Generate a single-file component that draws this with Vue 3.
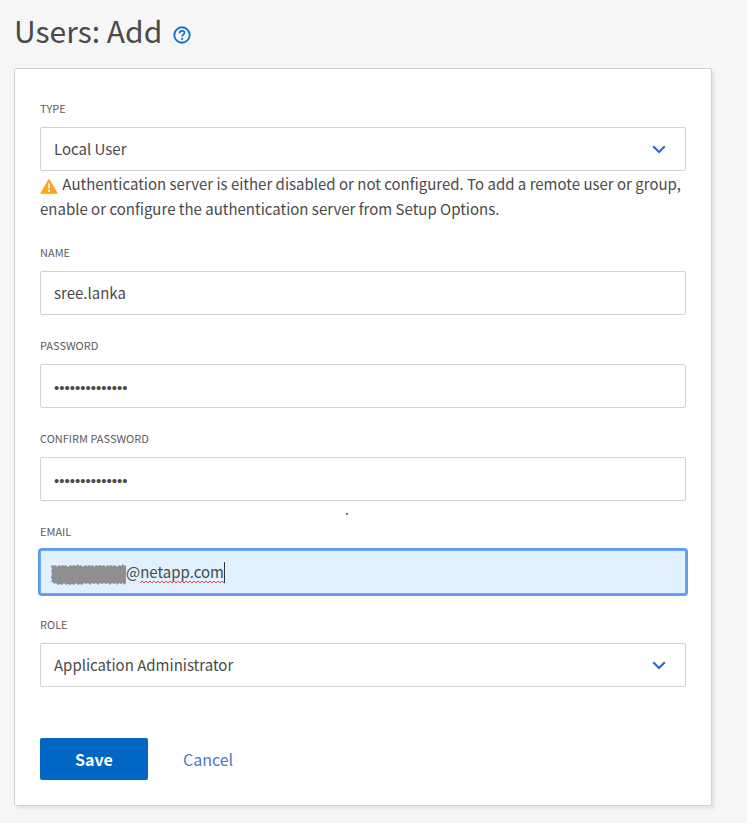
<script setup>
import { ref } from 'vue'

const type = ref('Local User')
const name = ref('sree.lanka')
const password = ref('abcdefghijklmn')
const confirmation = ref('abcdefghijklmn')
const email = ref('@netapp.com')
const role = ref('Application Administrator')
</script>

<template>
  <main class="page">
    <header class="heading">
      <h1>Users: Add</h1>
      <button class="help" type="button" aria-label="Help">
        <svg viewBox="0 0 18 18" width="18" height="18" fill="none">
          <circle cx="9" cy="9" r="7.7" stroke="#1670cc" stroke-width="1.9" />
          <path d="M6.6 7.2c0-1.5 1-2.4 2.5-2.4s2.4.8 2.4 2c0 1.6-2.3 1.8-2.3 3.7" stroke="#1670cc" stroke-width="1.7" />
          <circle cx="9.1" cy="12.8" r="1.1" fill="#1670cc" />
        </svg>
      </button>
    </header>

    <form class="card" @submit.prevent>
      <div class="field">
        <label for="type">TYPE</label>
        <div class="control">
          <select id="type" v-model="type">
            <option>Local User</option>
          </select>
          <svg class="chevron" viewBox="0 0 14 9" width="14" height="9" fill="none">
            <path d="M1.2 1.2 7 7l5.8-5.8" stroke="#2f69c8" stroke-width="2.2" />
          </svg>
        </div>
        <p class="notice">
          <svg viewBox="0 0 18 16" width="18" height="16">
            <path d="M9 1.3 17.2 15.3H.8Z" fill="#fca61f" stroke="#fca61f" stroke-linejoin="round" />
            <path d="M9 5.5v5" stroke="#fff" stroke-width="1.8" />
            <circle cx="9" cy="12.8" r="1.1" fill="#fff" />
          </svg>
          Authentication server is either disabled or not configured. To add a remote user or group, enable or configure the authentication server from Setup Options.
        </p>
      </div>

      <div class="field">
        <label for="name">NAME</label>
        <input id="name" v-model="name" type="text" />
      </div>

      <div class="field">
        <label for="password">PASSWORD</label>
        <input id="password" v-model="password" type="password" />
      </div>

      <div class="field">
        <label for="confirm">CONFIRM PASSWORD</label>
        <div class="control">
          <input id="confirm" v-model="confirmation" type="password" />
          <i class="speck"></i>
        </div>
      </div>

      <div class="field">
        <label for="email">EMAIL</label>
        <div class="control">
          <input id="email" v-model="email" class="active" type="text" />
          <svg class="redaction" viewBox="0 0 76 22" width="76" height="22">
            <path d="M0 2 2 1 3 2 5 1 6 3 8 1 10 2 12 1 13 2 15 1 17 3 19 1 21 2 23 1 25 2 27 0 28 2 30 1 32 3 34 1 36 2 38 1 40 2 42 1 43 3 45 1 47 2 49 1 51 2 53 1 55 3 56 1 58 2 60 1 62 2 64 1 66 3 68 1 70 2 72 0 73 2 75 1 75 19 73 21 72 19 70 20 68 19 66 21 65 19 63 20 61 19 59 21 57 19 55 20 53 19 51 20 49 19 47 21 45 19 43 20 41 19 39 21 37 19 35 20 33 19 31 21 29 20 27 21 25 19 23 21 21 20 19 21 17 20 15 21 13 19 11 21 9 20 7 21 5 19 3 20 2 18 0 18 1 16 0 13 1 10 0 7 1 5Z" fill="#8f8f8f" />
          </svg>
          <svg class="squiggle" width="84" height="4">
            <defs>
              <pattern id="wave" width="4" height="4" patternUnits="userSpaceOnUse">
                <path d="M0 3 2 1 4 3" fill="none" stroke="#e0484f" />
              </pattern>
            </defs>
            <rect width="84" height="4" fill="url(#wave)" />
          </svg>
          <i class="caret"></i>
        </div>
      </div>

      <div class="field">
        <label for="role">ROLE</label>
        <div class="control">
          <select id="role" v-model="role">
            <option>Application Administrator</option>
          </select>
          <svg class="chevron" viewBox="0 0 14 9" width="14" height="9" fill="none">
            <path d="M1.2 1.2 7 7l5.8-5.8" stroke="#2f69c8" stroke-width="2.2" />
          </svg>
        </div>
      </div>

      <div class="actions">
        <button class="save" type="submit">Save</button>
        <button class="cancel" type="button">Cancel</button>
      </div>
    </form>
  </main>
</template>

<style>
body {
  margin: 0;
  background: #f6f6f6;
}
</style>

<style scoped>
.page {
  padding: 6px 35px 17px 14px;
  color: #4a4a4a;
  font-family: "Noto Sans CJK SC", "Noto Sans", sans-serif;
  font-size: 15px;
}

.heading {
  display: flex;
  align-items: center;
  gap: 11px;
  height: 48px;
  margin-bottom: 14px;
}

h1 {
  margin: 0;
  font-size: 30px;
  font-weight: 400;
  line-height: 48px;
}

button {
  padding: 0;
  border: 0;
  background: none;
  font-family: inherit;
  cursor: pointer;
}

.help {
  display: flex;
  padding-top: 9px;
}

.card {
  display: flex;
  flex-direction: column;
  gap: 20px;
  padding: 29px 25px 25px;
  border: 1px solid #d2d2d2;
  border-radius: 2px;
  background: #fff;
  box-shadow: 3px 3px 2px #e6e6e6;
}

.field {
  display: flex;
  flex-direction: column;
}

label {
  height: 29px;
  color: #5c5c5c;
  font-size: 11px;
  line-height: 20px;
}

.control {
  position: relative;
  display: flex;
}

input,
select {
  box-sizing: border-box;
  width: 100%;
  height: 44px;
  margin: 0;
  padding: 0 13px 1px;
  border: 1px solid #d2d2d2;
  border-radius: 2px;
  outline: 0;
  appearance: none;
  background: #fff;
  color: #4a4a4a;
  font-family: inherit;
  font-size: 15px;
}

input[type="password"] {
  padding-top: 4px;
  font-family: "Liberation Sans", sans-serif;
}

.chevron {
  position: absolute;
  top: 18px;
  right: 20px;
  pointer-events: none;
}

.notice {
  margin: 0 0 1px;
  line-height: 25px;
}

.notice svg {
  margin-right: 1px;
  vertical-align: -4px;
}

.active {
  padding-left: 85px;
  border-color: #63b1f5;
  background: #e0f0fe;
  box-shadow: 0 0 0 2px #659aea;
}

.redaction {
  position: absolute;
  top: 14px;
  left: 11px;
}

.squiggle {
  position: absolute;
  top: 30px;
  left: 100px;
}

.caret {
  position: absolute;
  top: 12px;
  left: 184px;
  width: 1px;
  height: 21px;
  background: #333;
}

.speck {
  position: absolute;
  top: 56px;
  left: 306px;
  width: 2px;
  height: 2px;
  background: #777;
}

.actions {
  display: flex;
  align-items: center;
  gap: 35px;
  margin-top: 31px;
}

.save {
  width: 108px;
  height: 42px;
  border-radius: 2px;
  background: #0067c5;
  color: #fff;
  font-size: 16px;
  font-weight: 700;
}

.cancel {
  color: #4a76cc;
  font-size: 16px;
}
</style>
